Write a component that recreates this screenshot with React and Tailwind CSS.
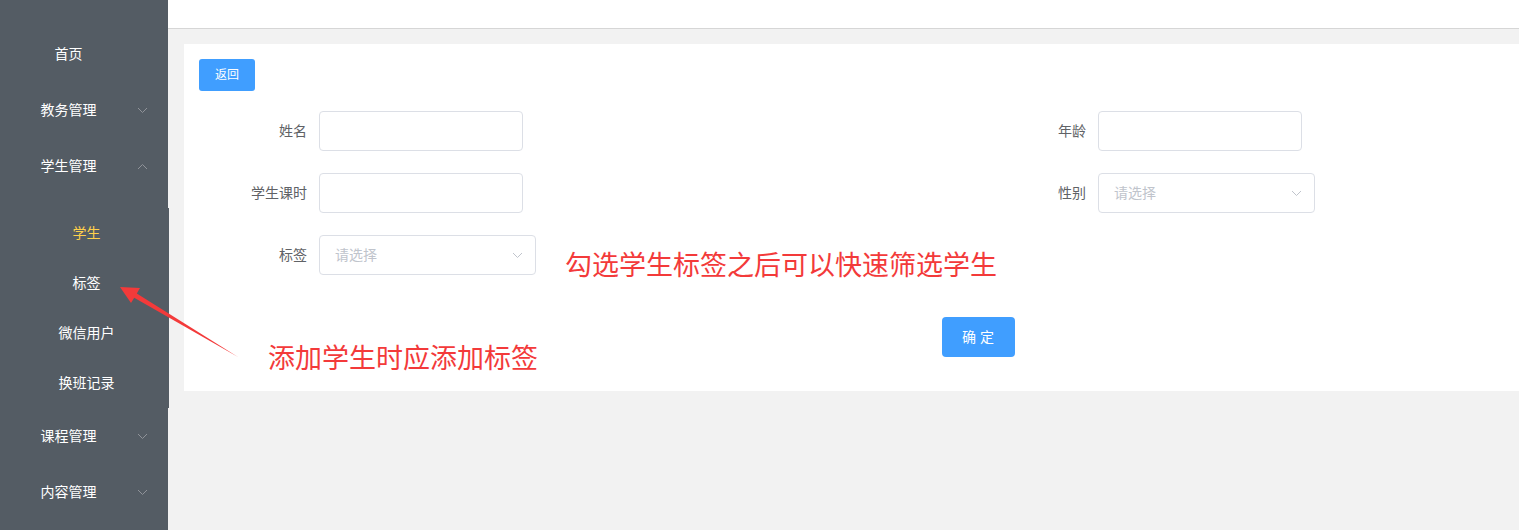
import React from "react";

const Chevron = ({ up, color = "#909399" }) => (
  <svg width="11" height="7" viewBox="0 0 11 7" className="shrink-0">
    <path
      d={up ? "M1 6 L5.5 1.5 L10 6" : "M1 1 L5.5 5.5 L10 1"}
      fill="none"
      stroke={color}
      strokeWidth="1"
    />
  </svg>
);

const MenuItem = ({ label, open, leaf }) => (
  <div className="h-[56px] flex items-center text-[14px] text-white">
    <div className="w-[137px] text-center">{label}</div>
    {!leaf && <Chevron up={open} />}
  </div>
);

const SubItem = ({ label, active }) => (
  <div className={`h-[50px] flex items-center text-[14px] ${active ? "text-[#ffd04b]" : "text-white"}`}>
    <div className="ml-[20px] w-[133px] text-center">{label}</div>
  </div>
);

const Field = ({ label, children }) => (
  <div className="flex h-[40px] mb-[22px]">
    <label className="w-[120px] pr-[12px] text-right text-[14px] leading-[40px] text-[#606266]">{label}</label>
    {children}
  </div>
);

const Input = () => (
  <div className="w-[204px] h-[40px] border border-[#dcdfe6] rounded-[4px] bg-white" />
);

const Select = () => (
  <div className="w-[217px] h-[40px] border border-[#dcdfe6] rounded-[4px] bg-white flex items-center justify-between pl-[15px] pr-[12px]">
    <span className="text-[14px] text-[#c0c4cc]">请选择</span>
    <Chevron color="#c0c4cc" />
  </div>
);

export default function App() {
  return (
    <div
      className="relative flex w-[1519px] h-[530px] overflow-hidden bg-[#f2f2f2]"
      style={{ fontFamily: '"Liberation Sans", "Noto Sans CJK SC", sans-serif' }}
    >
      <aside className="w-[168px] shrink-0 bg-[#545c64] pt-[26px]">
        <MenuItem label="首页" leaf />
        <MenuItem label="教务管理" />
        <MenuItem label="学生管理" open />
        <div className="relative z-10 mt-[14px] w-[169px] bg-[#545c64]">
          <SubItem label="学生" active />
          <SubItem label="标签" />
          <SubItem label="微信用户" />
          <SubItem label="换班记录" />
        </div>
        <MenuItem label="课程管理" />
        <MenuItem label="内容管理" />
      </aside>

      <main className="flex-1 min-w-0 flex flex-col">
        <header className="h-[29px] shrink-0 bg-white border-b border-[#d6d6d6]" />
        <div className="pl-[16px] pt-[15px]">
          <div className="w-[1588px] bg-white p-[15px]">
            <button className="w-[56px] h-[32px] bg-[#409eff] rounded-[3px] text-white text-[12px]">返回</button>
            <div className="mt-[20px] grid grid-cols-[779px_779px]">
              <Field label="姓名"><Input /></Field>
              <Field label="年龄"><Input /></Field>
              <Field label="学生课时"><Input /></Field>
              <Field label="性别"><Select /></Field>
              <Field label="标签"><Select /></Field>
              <div />
            </div>
            <div className="w-[1558px] flex justify-center mt-[20px] pb-[19px]">
              <button className="w-[73px] h-[40px] bg-[#409eff] rounded-[4px] text-white text-[14px]">确 定</button>
            </div>
          </div>
        </div>
      </main>

      <div className="absolute inset-0 z-20 pointer-events-none">
        <div className="absolute left-[565px] top-[253px] text-[27px] leading-none text-[#f33a3a] whitespace-nowrap">
          勾选学生标签之后可以快速筛选学生
        </div>
        <div className="absolute left-[268px] top-[346px] text-[27px] leading-none text-[#f33a3a] whitespace-nowrap">
          添加学生时应添加标签
        </div>
        <svg className="absolute left-0 top-0" width="1519" height="530">
          <polygon
            points="120,287 140,288 136.8,293.4 238,357 134.2,297.7 131,303"
            fill="#f33a3a"
          />
        </svg>
      </div>
    </div>
  );
}
